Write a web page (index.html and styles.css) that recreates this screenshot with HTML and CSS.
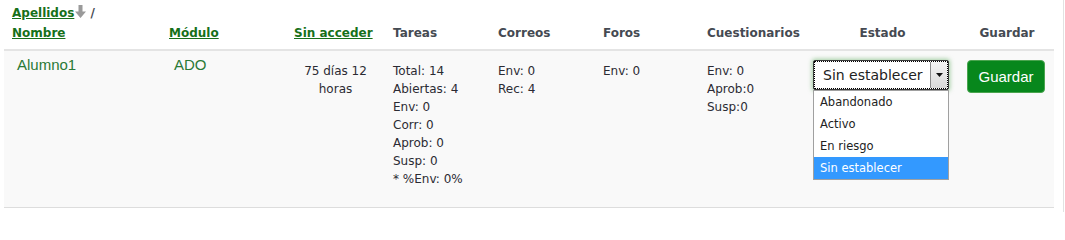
FILE: index.html
```html
<!DOCTYPE html>
<html lang="es">
<head>
<meta charset="utf-8">
<title>Seguimiento</title>
<link rel="stylesheet" href="styles.css">
</head>
<body>
<div class="page">
  <table class="grid">
    <colgroup>
      <col class="c1"><col class="c2"><col class="c3"><col class="c4"><col class="c5"><col class="c6"><col class="c7"><col class="c8"><col class="c9">
    </colgroup>
    <thead>
      <tr>
        <th><a href="#">Apellidos</a><svg class="sort" width="11" height="13" viewBox="0 0 11 13"><path d="M3.5 0h4v6.5h3.5l-5.5 6.5l-5.5-6.5h3.5z" fill="#9a9a9a"/></svg> /<br><a href="#">Nombre</a></th>
        <th><a href="#">Módulo</a></th>
        <th><a href="#">Sin acceder</a></th>
        <th>Tareas</th>
        <th>Correos</th>
        <th>Foros</th>
        <th>Cuestionarios</th>
        <th class="center">Estado</th>
        <th class="center">Guardar</th>
      </tr>
    </thead>
    <tbody>
      <tr class="row">
        <td class="name">Alumno1</td>
        <td class="name">ADO</td>
        <td class="center">75 días 12 horas</td>
        <td>Total: 14<br>Abiertas: 4<br>Env: 0<br>Corr: 0<br>Aprob: 0<br>Susp: 0<br>* %Env: 0%</td>
        <td>Env: 0<br>Rec: 4</td>
        <td>Env: 0</td>
        <td>Env: 0<br>Aprob:0<br>Susp:0</td>
        <td class="estado">
          <div class="select-wrap">
            <div class="select">
              <span class="select-value">Sin establecer</span>
              <span class="select-btn"><svg width="7" height="4" viewBox="0 0 7 4"><path d="M0 0h7l-3.5 4z" fill="#111"/></svg></span>
            </div>
            <ul class="options">
              <li>Abandonado</li>
              <li>Activo</li>
              <li>En riesgo</li>
              <li class="selected">Sin establecer</li>
            </ul>
          </div>
        </td>
        <td class="guardar"><button class="btn" type="button">Guardar</button></td>
      </tr>
    </tbody>
  </table>
</div>
</body>
</html>
```
FILE: styles.css
```css
html, body {
  margin: 0;
  padding: 0;
  background: #ffffff;
}

.page {
  width: 1064px;
  height: 212px;
  border-right: 1px solid #e2e2e2;
  padding-left: 4px;
  box-sizing: border-box;
  overflow: hidden;
}

.grid {
  width: 1050px;
  border-collapse: collapse;
  table-layout: fixed;
  font-family: "DejaVu Sans", Verdana, sans-serif;
  font-size: 12px;
  color: #2b2b33;
}

.c1 { width: 157px; }
.c2 { width: 125px; }
.c3 { width: 99px; }
.c4 { width: 105px; }
.c5 { width: 105px; }
.c6 { width: 104px; }
.c7 { width: 106px; }
.c8 { width: 155px; }
.c9 { width: 94px; }

.grid th {
  text-align: left;
  vertical-align: bottom;
  font-weight: bold;
  color: #454a52;
  line-height: 20px;
  padding: 3px 8px 6px 8px;
  border-bottom: 2px solid #e4e4e4;
  white-space: nowrap;
}

.grid th a {
  color: #17701a;
  text-decoration: underline;
}

.grid th.center,
.grid td.center {
  text-align: center;
}

.sort {
  vertical-align: -1px;
  margin-left: 1px;
}

.row td {
  background: #f9f9f9;
  vertical-align: top;
  line-height: 18px;
  padding: 11px 8px 19px 8px;
  border-bottom: 1px solid #dddddd;
}

.row td.name {
  font-family: "Liberation Sans", Arial, sans-serif;
  font-size: 15px;
  color: #2a7a36;
  padding-top: 5px;
  padding-left: 13px;
}

.row td.estado {
  padding-top: 9px;
}

.select-wrap {
  position: relative;
  width: 136px;
}

.select {
  display: flex;
  height: 30px;
  box-sizing: border-box;
  border: 1px solid #3a3a3a;
  border-radius: 2px;
  background: #ffffff;
  box-shadow: 0 0 4px 1px rgba(90, 170, 90, 0.55);
  outline: 1px dotted #000;
  outline-offset: -2px;
}

.select-value {
  flex: 1;
  font-size: 14px;
  line-height: 28px;
  padding-left: 9px;
  color: #222;
  white-space: nowrap;
}

.select-btn {
  width: 16px;
  margin: 1px 1px 1px 0;
  background: linear-gradient(#f4f4f4, #d9d9d9);
  border-left: 1px solid #8a8a8a;
  display: flex;
  align-items: center;
  justify-content: center;
}

.options {
  position: absolute;
  top: 30px;
  left: 0;
  width: 136px;
  box-sizing: border-box;
  margin: 0;
  padding: 0;
  list-style: none;
  background: #ffffff;
  border: 1px solid #a0a0a0;
  font-size: 11.5px;
  color: #222;
}

.options li {
  height: 22px;
  line-height: 22px;
  padding-left: 6px;
  white-space: nowrap;
}

.options li.selected {
  background: #3399ff;
  color: #ffffff;
}

.row td.guardar {
  padding-left: 7px;
  padding-top: 9px;
}

.btn {
  width: 78px;
  height: 33px;
  background: #07871c;
  border: 1px solid #4aa54f;
  border-radius: 4px;
  color: #ffffff;
  font-family: "Liberation Sans", Arial, sans-serif;
  font-size: 15px;
  padding: 0;
  cursor: pointer;
}
```
